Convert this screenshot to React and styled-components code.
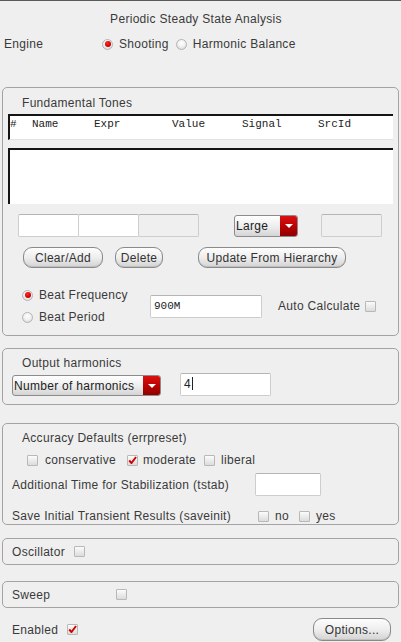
import React from 'react';
import styled, {createGlobalStyle} from 'styled-components';

const Global = createGlobalStyle`
    html, body {
        margin: 0;
        padding: 0;
        background: #efefef;
    }
    * {
        box-sizing: border-box;
    }
`

const Page = styled.div`
    width: 401px;
    height: 642px;
    overflow: hidden;
    background: #efefef;
    border-top: 1px solid #5a5a5a;
    padding: 0 2px 0 2px;
    font-family: "Liberation Sans", Arial, sans-serif;
    font-size: 12px;
    letter-spacing: 0.3px;
    color: #3a3a3a;
    line-height: 14px;
`

const Title = styled.div`
    margin-top: 11px;
    text-align: center;
    padding-right: 9px;
`

const EngineRow = styled.div`
    display: flex;
    align-items: center;
    height: 18px;
    margin-top: 9px;
    padding-left: 2px;
`

const EngineLabel = styled.span`
    width: 98px;
`

const Choice = styled.label`
    display: flex;
    align-items: center;
    gap: ${p => p.$gap || 6}px;
    margin-right: ${p => p.$mr || 0}px;
    white-space: nowrap;
`

const RadioDot = styled.span`
    width: 11px;
    height: 11px;
    border-radius: 50%;
    border: 1px solid #b4b4b4;
    background: radial-gradient(circle at 50% 35%, #ffffff 0%, #f2f2f2 45%, #cfcfcf 100%);
    display: flex;
    align-items: center;
    justify-content: center;
    flex: none;
    &::after {
        content: '';
        display: ${p => (p.$on ? 'block' : 'none')};
        width: 6px;
        height: 6px;
        border-radius: 50%;
        background: radial-gradient(circle at 40% 35%, #ff2a2a 0%, #d00000 60%, #900000 100%);
    }
`

const Box = styled.span`
    width: 11px;
    height: 11px;
    border: 1px solid #b8b8b8;
    border-radius: 1px;
    background: linear-gradient(#fbfbfb, #dcdcdc);
    display: inline-flex;
    align-items: center;
    justify-content: center;
    flex: none;
    margin-left: ${p => p.$ml || 0}px;
`

const Check = ({on, ml}) => (
    <Box $ml={ml}>
        {on && (
            <svg width="11" height="11" viewBox="0 0 11 11">
                <path d="M1.5 5.5 L4.3 8.6 L9.8 1.2" fill="none" stroke="#d40000" strokeWidth="2.4" strokeLinejoin="round" />
            </svg>
        )}
    </Box>
)

const Panel = styled.div`
    border: 1px solid #a4a4a4;
    border-radius: 5px;
    margin-top: ${p => p.$mt}px;
    height: ${p => p.$h}px;
`

const PanelTitle = styled.div`
    margin-top: ${p => p.$mt || 7}px;
    padding-left: 19px;
`

const TableHead = styled.div`
    margin: 4px 0 0 5px;
    width: 385px;
    height: 26px;
    background: #fff;
    border-top: 2px solid #141414;
    border-left: 2px solid #141414;
    border-bottom: 1px solid #e2e2e2;
    display: flex;
    padding-top: 1px;
    font-family: "Liberation Mono", "Courier New", monospace;
    font-size: 11px;
    letter-spacing: 0;
    color: #222;
`

const Col = styled.span`
    width: ${p => p.$w}px;
    flex: none;
`

const ListBox = styled.div`
    margin: 8px 0 0 5px;
    width: 385px;
    height: 56px;
    background: #fff;
    border-top: 2px solid #141414;
    border-left: 2px solid #141414;
`

const Row = styled.div`
    display: flex;
    align-items: ${p => p.$align || 'center'};
    margin-top: ${p => p.$mt || 0}px;
    padding-left: ${p => p.$pl || 0}px;
    height: ${p => (p.$h ? p.$h + 'px' : 'auto')};
`

const Field = styled.div`
    width: ${p => p.$w}px;
    height: 23px;
    flex: none;
    background: ${p => (p.$off ? '#efefef' : '#fff')};
    border: 1px solid #cdcdcd;
    border-top-color: #b5b5b5;
    border-radius: 2px;
    margin-left: ${p => p.$ml || 0}px;
    padding: 3px 0 0 3px;
    font-family: ${p => (p.$mono ? '"Liberation Mono", "Courier New", monospace' : 'inherit')};
    font-size: ${p => (p.$mono ? 11 : 12)}px;
    letter-spacing: 0;
    color: #222;
`

const Caret = styled.span`
    display: inline-block;
    width: 1px;
    height: 13px;
    background: #222;
    vertical-align: -2px;
    margin-left: 1px;
`

const Combo = styled.div`
    width: ${p => p.$w}px;
    height: ${p => p.$hh || 22}px;
    flex: none;
    margin-left: ${p => p.$ml || 0}px;
    display: flex;
    border: 1px solid #8c8c8c;
    border-radius: 3px;
    overflow: hidden;
    background: linear-gradient(#ffffff, #ececec 55%, #d4d4d4);
    color: #222;
`

const ComboText = styled.span`
    flex: 1;
    padding: 3px 0 0 1px;
    white-space: nowrap;
`

const ComboArrow = styled.span`
    width: 17px;
    flex: none;
    background: linear-gradient(#dc1010, #b40000 60%, #8e0000);
    display: flex;
    align-items: center;
    justify-content: center;
    &::after {
        content: '';
        border-left: 4px solid transparent;
        border-right: 4px solid transparent;
        border-top: 4px solid #fff;
    }
`

const Button = styled.button`
    width: ${p => p.$w}px;
    height: ${p => p.$hh || 21}px;
    flex: none;
    margin-left: ${p => p.$ml || 0}px;
    border: 1px solid #8a8a8a;
    border-radius: 9px;
    background: linear-gradient(#fdfdfd, #eeeeee 50%, #d3d3d3);
    font-family: inherit;
    font-size: 12px;
    letter-spacing: 0.3px;
    color: #333;
    padding: 0;
    box-shadow: inset 0 -1px 0 #c0c0c0;
`

const BeatGroup = styled.div`
    display: flex;
    flex-direction: column;
    gap: 2px;
    width: 147px;
    padding-left: 19px;
`

const BeatLine = styled.div`
    height: 20px;
    display: flex;
    align-items: center;
`

const Label = styled.span`
    width: ${p => (p.$w ? p.$w + 'px' : 'auto')};
    flex: none;
    margin-left: ${p => p.$ml || 0}px;
    white-space: nowrap;
`

const Footer = styled.div`
    display: flex;
    align-items: center;
    justify-content: space-between;
    margin-top: 10px;
    padding: 0 8px 0 10px;
`

export default function App() {
    return (
        <Page>
            <Global />
            <Title>Periodic Steady State Analysis</Title>
            <EngineRow>
                <EngineLabel>Engine</EngineLabel>
                <Choice $mr={7}><RadioDot $on />Shooting</Choice>
                <Choice><RadioDot />Harmonic Balance</Choice>
            </EngineRow>

            <Panel $mt={34} $h={249}>
                <PanelTitle $mt={8}>Fundamental Tones</PanelTitle>
                <TableHead>
                    <Col $w={22}>#</Col>
                    <Col $w={62}>Name</Col>
                    <Col $w={78}>Expr</Col>
                    <Col $w={70}>Value</Col>
                    <Col $w={76}>Signal</Col>
                    <Col $w={60}>SrcId</Col>
                </TableHead>
                <ListBox />
                <Row $mt={10} $pl={15}>
                    <Field $w={61} />
                    <Field $w={61} $ml={-1} />
                    <Field $w={61} $ml={-1} $off />
                    <Combo $w={64} $ml={35}>
                        <ComboText>Large</ComboText>
                        <ComboArrow />
                    </Combo>
                    <Field $w={61} $ml={23} $off />
                </Row>
                <Row $mt={10} $pl={20}>
                    <Button $w={80}>Clear/Add</Button>
                    <Button $w={48} $ml={12}>Delete</Button>
                    <Button $w={148} $ml={35}>Update From Hierarchy</Button>
                </Row>
                <Row $mt={17}>
                    <BeatGroup>
                        <BeatLine><Choice><RadioDot $on />Beat Frequency</Choice></BeatLine>
                        <BeatLine><Choice><RadioDot />Beat Period</Choice></BeatLine>
                    </BeatGroup>
                    <Field $w={112} $mono>900M</Field>
                    <Label $ml={16}>Auto Calculate</Label>
                    <Check ml={5} />
                </Row>
            </Panel>

            <Panel $mt={12} $h={57}>
                <PanelTitle>Output harmonics</PanelTitle>
                <Row $mt={3} $pl={9} $align="flex-end">
                    <Combo $w={149} $hh={21}>
                        <ComboText>Number of harmonics</ComboText>
                        <ComboArrow />
                    </Combo>
                    <Field $w={91} $ml={19}>4<Caret /></Field>
                </Row>
            </Panel>

            <Panel $mt={18} $h={102}>
                <PanelTitle>Accuracy Defaults (errpreset)</PanelTitle>
                <Row $mt={6} $h={18} $pl={24}>
                    <Choice $gap={7} $mr={11}><Check />conservative</Choice>
                    <Choice $gap={5} $mr={8}><Check on />moderate</Choice>
                    <Choice $gap={6}><Check />liberal</Choice>
                </Row>
                <Row $mt={4} $pl={9}>
                    <Label $w={243}>Additional Time for Stabilization (tstab)</Label>
                    <Field $w={66} />
                </Row>
                <Row $mt={13} $h={14} $pl={9}>
                    <Label $w={246}>Save Initial Transient Results (saveinit)</Label>
                    <Choice $gap={6} $mr={10}><Check />no</Choice>
                    <Choice $gap={6}><Check />yes</Choice>
                </Row>
            </Panel>

            <Panel $mt={13} $h={27}>
                <Row $h={25} $pl={9}>
                    <Label $w={62}>Oscillator</Label>
                    <Check />
                </Row>
            </Panel>

            <Panel $mt={16} $h={27}>
                <Row $h={25} $pl={9}>
                    <Label $w={104}>Sweep</Label>
                    <Check />
                </Row>
            </Panel>

            <Footer>
                <Row>
                    <Label $w={55}>Enabled</Label>
                    <Check on />
                </Row>
                <Button $w={78} $hh={23}>Options...</Button>
            </Footer>
        </Page>
    );
}
